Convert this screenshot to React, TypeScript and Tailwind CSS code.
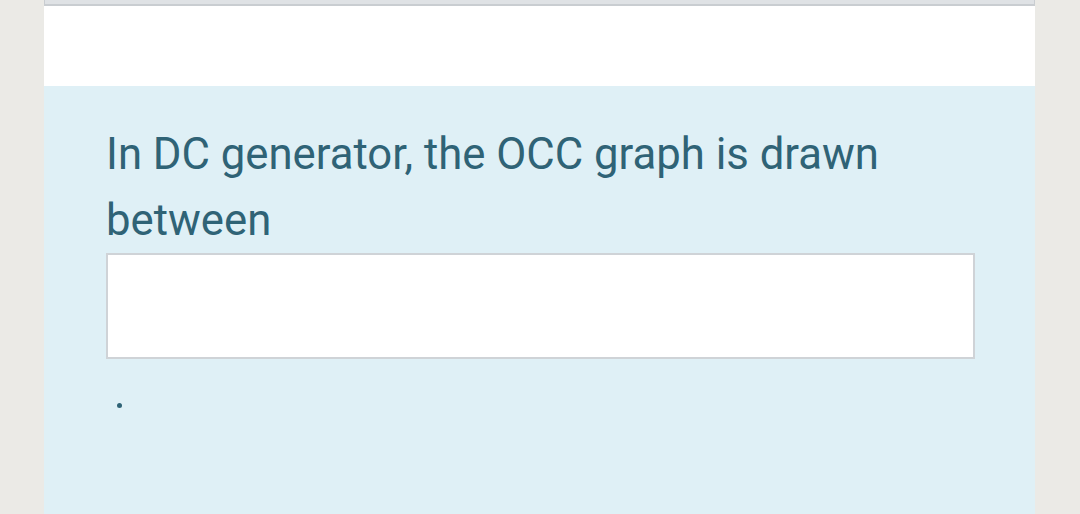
export default function App() {
  return (
    <div
      className="h-[514px] w-[1080px] overflow-hidden bg-[#ebeae6] pl-[44px]"
      style={{ fontFamily: 'Roboto, "Noto Sans", sans-serif' }}
    >
      <div className="flex h-full w-[991px] flex-col">
        {/* top (previous question box edge) */}
        <div className="h-[86px] bg-white">
          <div className="h-[6px] border-x border-b-2 border-[#c9cdd1] bg-[#dfe2e5]" />
        </div>

        {/* question body */}
        <div className="flex-1 bg-[#dff0f6] pl-[62px] pt-[35px]">
          <p className="w-[820px] text-[43.7px] leading-[66px] text-[#2f6376]">
            In DC generator, the OCC graph is drawn between
          </p>
          <div className="h-[106px] w-[869px] border-2 border-[#cfd3d7] bg-white" />
          <div className="ml-[11px] mt-[44px] h-[5px] w-[5px] rounded-full bg-[#2f6376]" />
        </div>
      </div>
    </div>
  );
}
